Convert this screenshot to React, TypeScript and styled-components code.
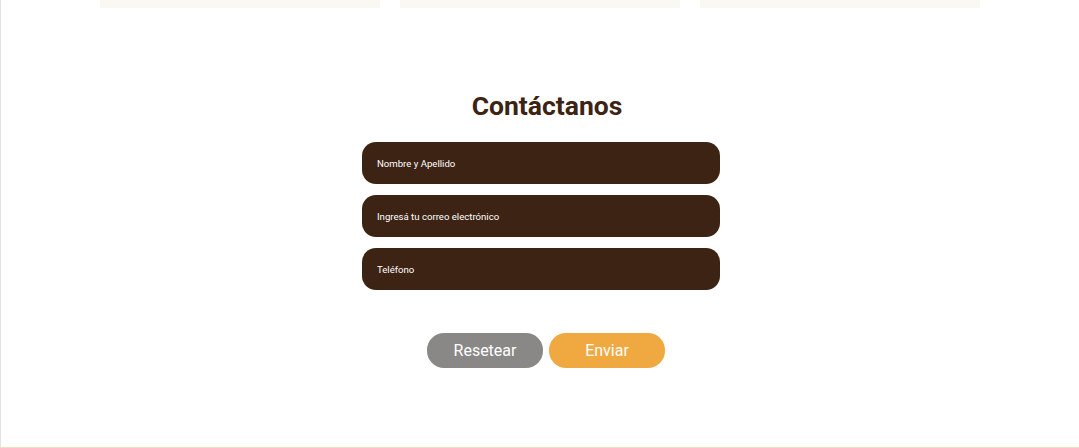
import React from "react";
import styled, { createGlobalStyle } from "styled-components";

const GlobalStyle = createGlobalStyle`
  html, body {
    margin: 0;
    padding: 0;
    background: #ffffff;
    font-family: Roboto, "Liberation Sans", sans-serif;
  }
`;

const Page = styled.div`
  box-sizing: border-box;
  width: 1079px;
  height: 448px;
  border-left: 1px solid #e2e2e2;
  border-bottom: 1px solid #f2dcbb;
  display: flex;
  flex-direction: column;
  background: #fff;
`;

const CardRow = styled.div`
  display: flex;
  gap: 20px;
  padding-left: 99px;
`;

const Card = styled.div`
  width: 280px;
  height: 8px;
  background: #faf8f3;
`;

const Section = styled.section`
  display: flex;
  flex-direction: column;
  align-items: center;
  padding-top: 82px;
`;

const Title = styled.h2`
  margin: 0 0 20px 14px;
  font-size: 26.5px;
  line-height: 32px;
  font-weight: 700;
  color: #3d2314;
`;

const Form = styled.form`
  display: flex;
  flex-direction: column;
  align-items: center;
  margin-left: 2px;
`;

const Fields = styled.div`
  display: flex;
  flex-direction: column;
  gap: 11px;
`;

const Field = styled.input`
  box-sizing: border-box;
  width: 358px;
  height: 42px;
  border: none;
  border-radius: 14px;
  background: #3d2314;
  color: #fff;
  padding: 1px 15px 0;
  font-family: Roboto, "Liberation Sans", sans-serif;
  font-size: 9.6px;
  outline: none;

  &::placeholder {
    color: #ffffff;
    opacity: 1;
  }
`;

const Actions = styled.div`
  display: flex;
  gap: 6px;
  margin: 43px 0 0 10px;
`;

const Button = styled.button<{ $variant: "reset" | "send" }>`
  width: 116px;
  height: 35px;
  border: none;
  border-radius: 17px;
  background: ${(p) => (p.$variant === "send" ? "#f0a940" : "#8a8886")};
  color: #fff;
  font-family: Roboto, "Liberation Sans", sans-serif;
  font-size: 16px;
  cursor: pointer;
`;

export default function App() {
  return (
    <>
      <GlobalStyle />
      <Page>
        <CardRow>
          <Card />
          <Card />
          <Card />
        </CardRow>
        <Section>
          <Title>Contáctanos</Title>
          <Form onSubmit={(e) => e.preventDefault()}>
            <Fields>
              <Field type="text" placeholder="Nombre y Apellido" />
              <Field type="email" placeholder="Ingresá tu correo electrónico" />
              <Field type="tel" placeholder="Teléfono" />
            </Fields>
            <Actions>
              <Button type="reset" $variant="reset">
                Resetear
              </Button>
              <Button type="submit" $variant="send">
                Enviar
              </Button>
            </Actions>
          </Form>
        </Section>
      </Page>
    </>
  );
}
